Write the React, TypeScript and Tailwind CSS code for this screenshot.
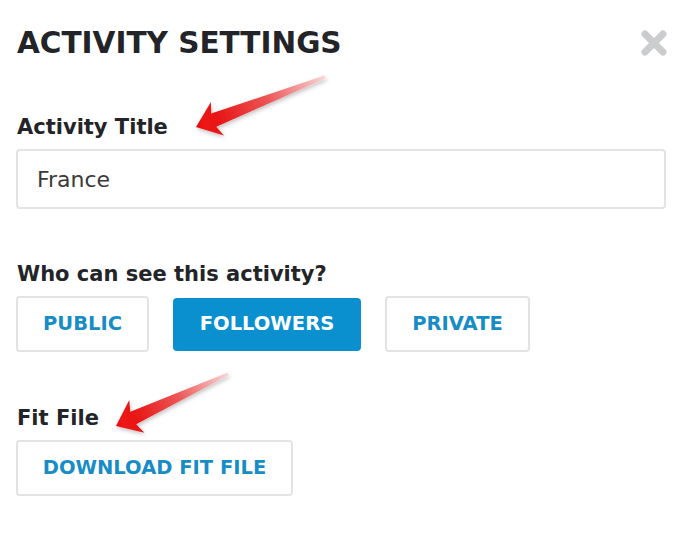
import React from "react";

const font = { fontFamily: '"DejaVu Sans", sans-serif' };

const Arrow = ({ tail, tip, id }: { tail: [number, number]; tip: [number, number]; id: string }) => {
  const [tx, ty] = tail;
  const [px, py] = tip;
  const dx = px - tx;
  const dy = py - ty;
  const len = Math.hypot(dx, dy);
  const ux = dx / len;
  const uy = dy / len;
  const nx = -uy;
  const ny = ux;
  const headLen = 23;
  const bx = px - ux * headLen;
  const by = py - uy * headLen;
  // barbs sit a bit behind the neck
  const nkx = px - ux * 19;
  const nky = py - uy * 19;
  const pts = [
    [tx + nx * 1.5, ty + ny * 1.5],
    [nkx + nx * 7, nky + ny * 7],
    [bx + nx * 18, by + ny * 18],
    [px, py],
    [bx - nx * 18, by - ny * 18],
    [nkx - nx * 7, nky - ny * 7],
    [tx - nx * 1.5, ty - ny * 1.5],
  ]
    .map((p) => p.join(","))
    .join(" ");
  return (
    <svg className="pointer-events-none absolute left-0 top-0" width="685" height="540">
      <defs>
        <linearGradient id={id} gradientUnits="userSpaceOnUse" x1={tx} y1={ty} x2={px} y2={py}>
          <stop offset="0" stopColor="#f8d6d6" />
          <stop offset="0.45" stopColor="#ec5555" />
          <stop offset="0.8" stopColor="#e81a1a" />
          <stop offset="1" stopColor="#ee0f0f" />
        </linearGradient>
        <filter id={id + "s"} x="-20%" y="-20%" width="140%" height="140%">
          <feDropShadow dx="1" dy="2" stdDeviation="2" floodColor="#000" floodOpacity="0.25" />
        </filter>
      </defs>
      <polygon points={pts} fill={`url(#${id})`} filter={`url(#${id}s)`} />
    </svg>
  );
};

const Choice = ({ label, active, w }: { label: string; active?: boolean; w: string }) => (
  <button
    className={
      active
        ? `${w} h-[53px] rounded-[4px] bg-[#0a8fcf] text-[19.5px] font-bold text-white`
        : `${w} h-[56px] rounded-[4px] border-2 border-[#e3e3e3] bg-white text-[19.5px] font-bold text-[#178cc6]`
    }
    style={font}
  >
    {label}
  </button>
);

export default function App() {
  return (
    <div className="relative h-[540px] w-[685px] overflow-hidden bg-white text-[#222428]" style={font}>
      <div className="flex items-center justify-between pl-[17px] pr-[18px] pt-[26px]">
        <h1 className="text-[29.5px] font-bold leading-[34px]">ACTIVITY SETTINGS</h1>
        <svg width="26" height="26" viewBox="0 0 26 26">
          <path d="M4 4 L22 22 M22 4 L4 22" stroke="#c9cdcd" strokeWidth="7" strokeLinecap="round" />
        </svg>
      </div>

      <div className="pl-[16px] pr-[19px]">
        <div className="mt-[53px] pl-px text-[21px] font-bold leading-[28px]">Activity Title</div>
        <div className="mt-[8px] flex h-[60px] items-center rounded-[4px] border-2 border-[#e3e3e3] px-[19px] text-[22px] text-[#3a3a3a]">
          France
        </div>

        <div className="mt-[51px] pl-px text-[21px] font-bold leading-[28px]">Who can see this activity?</div>
        <div className="mt-[8px] flex items-center gap-[24px]">
          <Choice label="PUBLIC" w="w-[133px]" />
          <Choice label="FOLLOWERS" active w="w-[188px]" />
          <Choice label="PRIVATE" w="w-[145px]" />
        </div>

        <div className="mt-[52px] pl-px text-[21px] font-bold leading-[28px]">Fit File</div>
        <div className="mt-[8px]">
          <Choice label="DOWNLOAD FIT FILE" w="w-[277px]" />
        </div>
      </div>

      <Arrow id="a1" tail={[325, 77]} tip={[196, 127]} />
      <Arrow id="a2" tail={[228, 374]} tip={[116, 426]} />
    </div>
  );
}
